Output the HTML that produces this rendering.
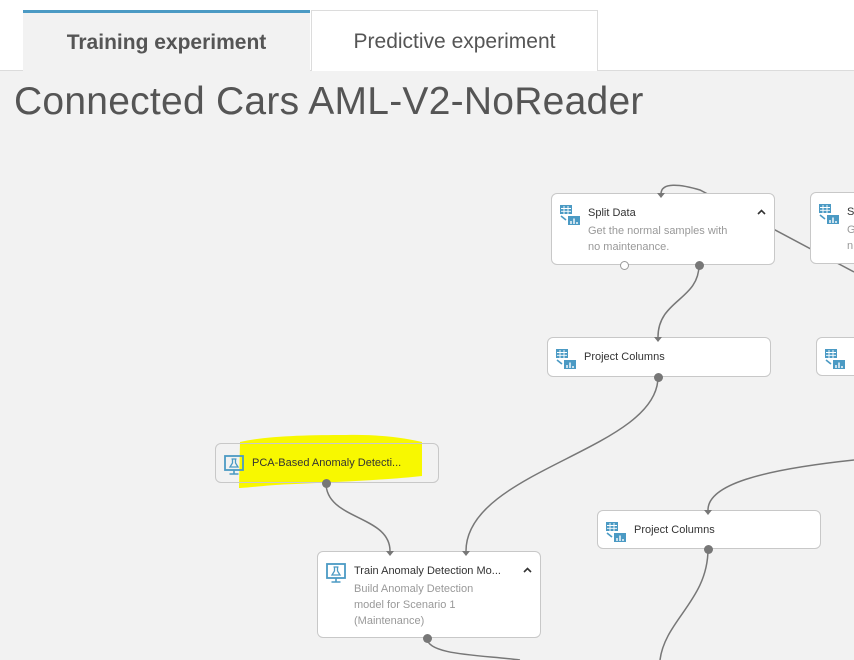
<!DOCTYPE html>
<html><head><meta charset="utf-8"><style>
*{margin:0;padding:0;box-sizing:border-box}
body{width:854px;height:660px;overflow:hidden;background:#f2f2f2;font-family:"Segoe UI","Liberation Sans",sans-serif;position:relative}
.top{position:absolute;left:0;top:0;width:854px;height:71px;background:#fff;border-bottom:1px solid #dcdcdc}
.tab{position:absolute;top:10px;height:62px;font-size:21px;line-height:62px;text-align:center;color:#555}
.t1{left:23px;width:287px;background:#f2f2f2;border-top:3px solid #4b9ac4;font-weight:bold;color:#555;line-height:60px;height:62px}
.t2{left:311px;width:287px;background:#fff;border:1px solid #dcdcdc;border-bottom:none;height:61px;line-height:62px}
h1{position:absolute;left:14px;top:80px;font-size:39px;font-weight:normal;color:#555;letter-spacing:0.25px}
.n{position:absolute;background:#fff;border:1px solid #c8c8c8;border-radius:6px}
.n .ic{position:absolute;left:8px;top:11px}
.n .ti{position:absolute;left:36px;top:13px;font-size:11px;color:#333;white-space:nowrap}
.n .ds{position:absolute;left:36px;top:29px;font-size:11px;color:#999;line-height:16px;white-space:nowrap}
.car{position:absolute;right:8px;top:15px}
svg.l{position:absolute;left:0;top:0}
.dot{position:absolute;width:9px;height:9px;border-radius:50%;background:#777}
</style></head><body>
<div class="top"></div>
<div class="tab t1">Training experiment</div>
<div class="tab t2">Predictive experiment</div>
<h1>Connected Cars AML-V2-NoReader</h1>
<svg class="l" width="854" height="660" fill="none" stroke="#777" stroke-width="1.5">
<path d="M661,194 C661,182 680,184 700,190 L854,272"/>
<path d="M699,265 C699,300 658,300 658,337"/>
<path d="M658,377 C658,450 466,470 466,551"/>
<path d="M326,483 C326,520 390,515 390,551"/>
<path d="M854,460 C760,470 708,485 708,510"/>
<path d="M708,549 C708,600 665,620 660,660"/>
<path d="M427,638 C427,655 480,655 520,660"/>
</svg>
<svg width="0" height="0" style="position:absolute"><defs>
<g id="gi"><rect x="0" y="0" width="12" height="9" fill="#4b9ac4"/><path d="M1,3.5H11M1,6.3H11M4,1V9M8,1V9" stroke="#fff" stroke-width="0.9"/><path d="M1,11 L6,15" stroke="#4b9ac4" stroke-width="1.6"/><rect x="8" y="11" width="12" height="9" fill="#4b9ac4"/><path d="M11,19V16M14,19V13.5M17,19V17" stroke="#fff" stroke-width="1.4"/></g>
<g id="mi"><rect x="1" y="1" width="18" height="14" fill="none" stroke="#4b9ac4" stroke-width="1.8"/><path d="M7.5,4H12.5M8.5,4V8L6,12H14L11.5,8V4" fill="none" stroke="#4b9ac4" stroke-width="1.3"/><path d="M10,15V18.5M5.5,19H14.5" stroke="#4b9ac4" stroke-width="1.6"/></g>
<g id="ch"><path d="M1,5 L4.5,1.5 L8,5" stroke="#333" stroke-width="1.6" fill="none"/></g>
<g id="ar"><path d="M0,0 L8,0 L4,5Z" fill="#777"/></g>
</defs></svg>
<div class="n" style="left:551px;top:193px;width:224px;height:72px"><svg class="ic" width="20" height="20"><use href="#gi"/></svg><div class="ti">Split Data</div><div class="ds">Get the normal samples with<br>no maintenance.</div><svg class="car" width="9" height="7"><use href="#ch"/></svg></div>
<div class="n" style="left:810px;top:192px;width:60px;height:72px"><svg class="ic" width="20" height="20"><use href="#gi"/></svg><div class="ti">Sp</div><div class="ds">G<br>n</div></div>
<div class="n" style="left:547px;top:337px;width:224px;height:40px"><svg class="ic" width="20" height="20"><use href="#gi"/></svg><div class="ti">Project Columns</div></div>
<div class="n" style="left:816px;top:337px;width:60px;height:39px"><svg class="ic" width="20" height="20"><use href="#gi"/></svg></div>
<svg style="position:absolute;left:236px;top:430px" width="190" height="62"><path d="M4,12 C30,6 70,5 110,5 C140,4 170,8 186,12 L186,46 C150,50 100,52 60,54 C30,55 10,58 3,58 Z" fill="#f8f800"/></svg>
<div class="n" style="left:215px;top:443px;width:224px;height:40px;background:transparent"><svg class="ic" width="20" height="20"><use href="#mi"/></svg><div class="ti">PCA-Based Anomaly Detecti...</div></div>
<div class="n" style="left:597px;top:510px;width:224px;height:39px"><svg class="ic" width="20" height="20"><use href="#gi"/></svg><div class="ti">Project Columns</div></div>
<div class="n" style="left:317px;top:551px;width:224px;height:87px"><svg class="ic" width="20" height="20"><use href="#mi"/></svg><div class="ti">Train Anomaly Detection Mo...</div><div class="ds">Build Anomaly Detection<br>model for Scenario 1<br>(Maintenance)</div><svg class="car" width="9" height="7"><use href="#ch"/></svg></div>
<svg class="l" width="854" height="660">
<use href="#ar" x="657" y="193"/><use href="#ar" x="654" y="337"/><use href="#ar" x="704" y="510"/><use href="#ar" x="386" y="551"/><use href="#ar" x="462" y="551"/>
</svg>
<div class="dot" style="left:620px;top:261px;background:#fff;border:1px solid #999"></div>
<div class="dot" style="left:695px;top:261px"></div>
<div class="dot" style="left:654px;top:373px"></div>
<div class="dot" style="left:322px;top:479px"></div>
<div class="dot" style="left:704px;top:545px"></div>
<div class="dot" style="left:423px;top:634px"></div>
</body></html>
